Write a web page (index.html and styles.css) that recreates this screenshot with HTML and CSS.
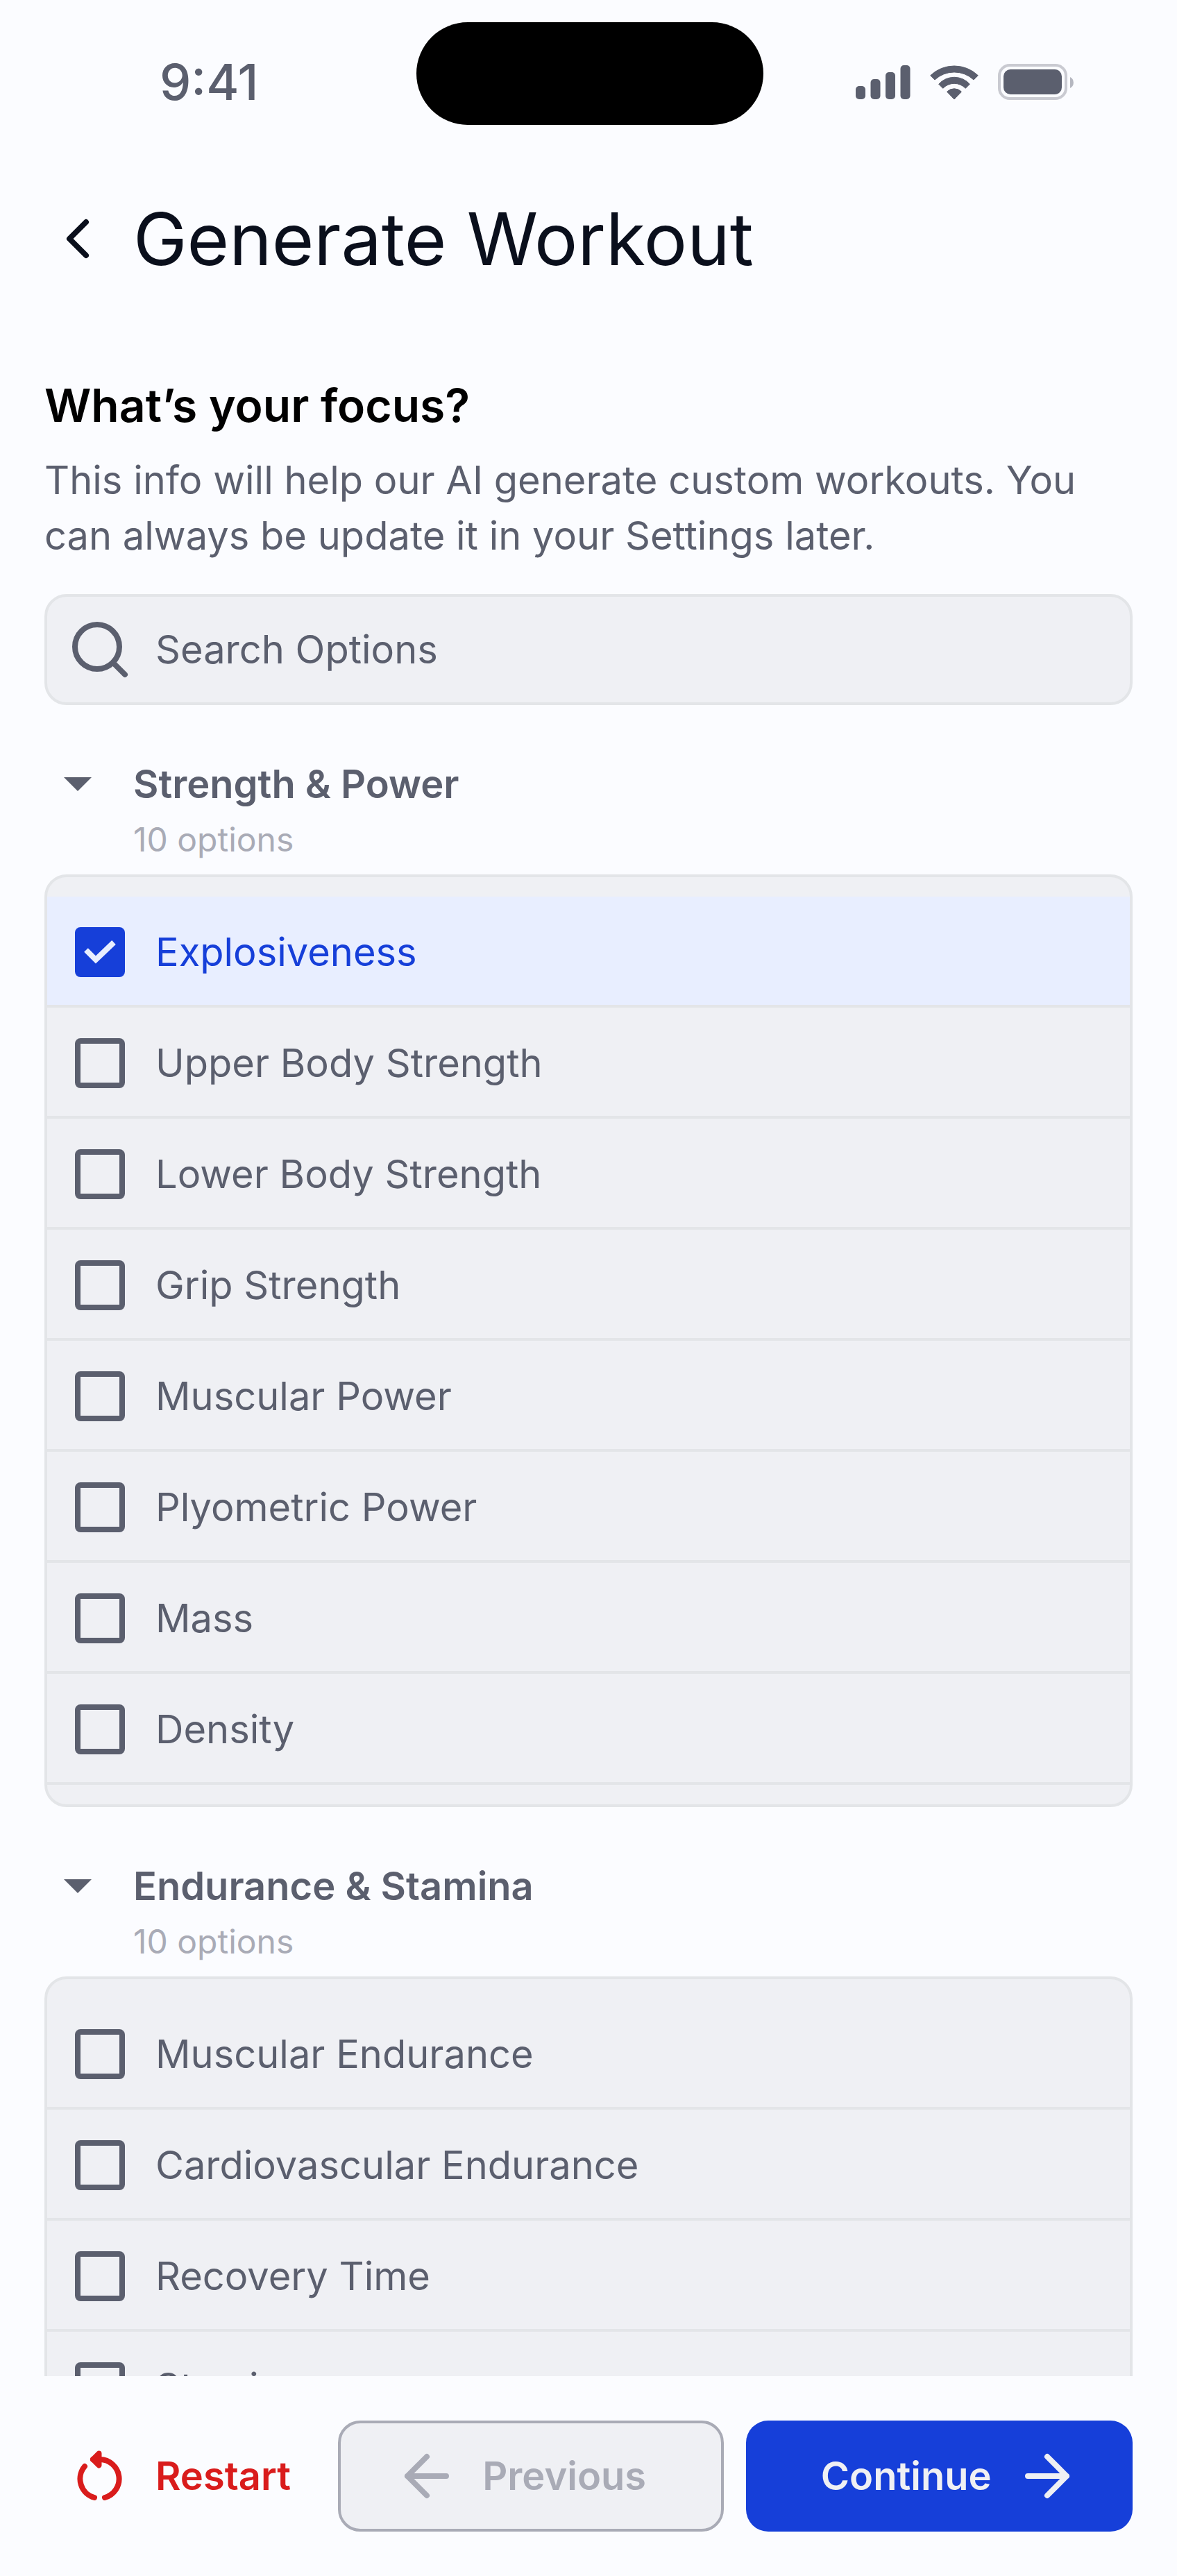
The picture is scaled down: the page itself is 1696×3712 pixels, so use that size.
FILE: index.html
```html
<!DOCTYPE html>
<html lang="en">
<head>
<meta charset="utf-8">
<meta name="viewport" content="width=device-width, initial-scale=1">
<title>Generate Workout</title>
<link rel="stylesheet" href="styles.css">
</head>
<body>
<div class="screen">
  <div class="status">
    <span class="status-time">9:41</span>
    <span class="island"></span>
    <span class="status-icons">
      <svg width="80" height="52" viewBox="0 0 80 52" fill="currentColor" aria-hidden="true">
        <rect x="1" y="32" width="14" height="19" rx="5"/><rect x="22.500" y="22" width="14" height="29" rx="5"/><rect x="44" y="12" width="14" height="39" rx="5"/><rect x="65.500" y="2" width="14" height="49" rx="5"/>
      </svg>
      <svg width="70" height="52" viewBox="0 0 70 52" fill="currentColor" stroke="currentColor" stroke-linejoin="round" aria-hidden="true">
        <path d="M.7 16.800A49.500 49.500 0 0 1 69.300 16.800L63 23A41 41 0 0 0 7 23z"/>
        <path d="M12.700 29.200A30 30 0 0 1 57.300 29.200L51.300 35.300A22.500 22.500 0 0 0 18.700 35.300z"/>
        <path d="M24.600 40.200A14.500 14.500 0 0 1 45.400 40.200L35 51z"/>
      </svg>
      <svg width="110" height="52" viewBox="0 0 110 52" aria-hidden="true">
        <rect x="2" y="2" width="96" height="48" rx="15" fill="none" stroke="#c9cad1" stroke-width="4"/>
        <rect x="8" y="8" width="84" height="36" rx="10" fill="currentColor"/>
        <path d="M104 19v16a9 9 0 0 0 0-16z" fill="#b5b7c0"/>
      </svg>
    </span>
  </div>

  <header class="topbar">
    <button class="back" type="button" aria-label="Back">
      <svg width="64" height="64" viewBox="0 0 64 64" fill="none" stroke="currentColor" stroke-width="8" stroke-linecap="round" stroke-linejoin="round"><path d="M44 8 20 32l24 24"/></svg>
    </button>
    <h1 class="title">Generate Workout</h1>
  </header>

  <main class="content">
    <h2 class="question">What’s your focus?</h2>
    <p class="lead">This info will help our AI generate custom workouts. You can always be update it in your Settings later.</p>
    <label class="search">
      <svg width="96" height="96" viewBox="0 0 96 96" fill="none" stroke="currentColor" stroke-width="8" stroke-linecap="round" aria-hidden="true"><circle cx="44" cy="44" r="32"/><path d="m67 67 17 17"/></svg>
      <input class="search-input" type="search" placeholder="Search Options" aria-label="Search Options">
    </label>

    <section class="group">
      <button class="group-head" type="button" aria-expanded="true">
        <svg class="caret" width="40" height="20" viewBox="0 0 40 20" fill="currentColor" aria-hidden="true"><path d="M0 0h40L20 20z"/></svg>
        <span class="group-name">Strength &amp; Power</span>
        <span class="group-count">10 options</span>
      </button>
      <div class="options">
        <label class="option"><input class="box" type="checkbox" checked><span>Explosiveness</span></label>
        <label class="option"><input class="box" type="checkbox"><span>Upper Body Strength</span></label>
        <label class="option"><input class="box" type="checkbox"><span>Lower Body Strength</span></label>
        <label class="option"><input class="box" type="checkbox"><span>Grip Strength</span></label>
        <label class="option"><input class="box" type="checkbox"><span>Muscular Power</span></label>
        <label class="option"><input class="box" type="checkbox"><span>Plyometric Power</span></label>
        <label class="option"><input class="box" type="checkbox"><span>Mass</span></label>
        <label class="option"><input class="box" type="checkbox"><span>Density</span></label>
      </div>
    </section>

    <section class="group">
      <button class="group-head" type="button" aria-expanded="true">
        <svg class="caret" width="40" height="20" viewBox="0 0 40 20" fill="currentColor" aria-hidden="true"><path d="M0 0h40L20 20z"/></svg>
        <span class="group-name">Endurance &amp; Stamina</span>
        <span class="group-count">10 options</span>
      </button>
      <div class="options">
        <label class="option"><input class="box" type="checkbox"><span>Muscular Endurance</span></label>
        <label class="option"><input class="box" type="checkbox"><span>Cardiovascular Endurance</span></label>
        <label class="option"><input class="box" type="checkbox"><span>Recovery Time</span></label>
        <label class="option"><input class="box" type="checkbox"><span>Stamina</span></label>
      </div>
    </section>
  </main>

  <footer class="actions">
    <button class="btn btn-restart" type="button">
      <svg width="96" height="96" viewBox="0 0 96 96" fill="none" stroke="currentColor" stroke-width="8" stroke-linecap="round" stroke-linejoin="round" aria-hidden="true"><path d="M55 79A28 28 0 0 0 48 24H38"/><path d="m46.500 15.500-8.500 8.500 8.500 8.500z" fill="currentColor"/><path d="M26 34A28 28 0 0 0 40 79"/></svg>
      Restart
    </button>
    <button class="btn btn-previous" type="button" disabled>
      <svg width="96" height="96" viewBox="0 0 96 96" fill="none" stroke="currentColor" stroke-width="8" stroke-linecap="round" stroke-linejoin="round" aria-hidden="true"><path d="M76 48H20M48 20 20 48l28 28"/></svg>
      Previous
    </button>
    <button class="btn btn-continue" type="button">
      Continue
      <svg width="96" height="96" viewBox="0 0 96 96" fill="none" stroke="currentColor" stroke-width="8" stroke-linecap="round" stroke-linejoin="round" aria-hidden="true"><path d="M20 48h56M48 20l28 28-28 28"/></svg>
    </button>
  </footer>
</div>
</body>
</html>
```
FILE: styles.css
```css
:root {
  --bg: #fbfcff;
  --surface: #eff0f4;
  --line: #e3e5e8;
  --text: #5b5f6e;
  --muted: #a9abb6;
  --primary: #163fd9;
  --primary-soft: #e8eeff;
  --danger: #d91c1c;
}

* { box-sizing: border-box; }

body {
  margin: 0;
  background: var(--bg);
  color: var(--text);
  font: 400 56px/80px Inter, "Liberation Sans", sans-serif;
  font-optical-sizing: none;
}

button, input { font: inherit; color: inherit; }
button { border: 0; padding: 0; background: none; cursor: pointer; }
svg { display: block; flex: none; }
h1, h2, p { margin: 0; }

.screen { display: flex; flex-direction: column; height: 100vh; }

.status {
  display: grid;
  grid-template-columns: 1fr auto 1fr;
  align-items: center;
  padding: 32px 148px 0 152px;
}
.status-time { padding: 24px 0 0 78px; font-size: 72px; font-weight: 500; line-height: 80px; }
.island { width: 500px; height: 148px; border-radius: 74px; background: #000; }
.status-icons { display: flex; justify-content: flex-end; gap: 28px; padding-top: 24px; }

.topbar { display: flex; align-items: center; gap: 48px; padding: 100px 64px 120px 80px; color: #0a0f1c; }
.title { font-size: 104px; font-weight: 400; line-height: 128px; }

.content { flex: 1; min-height: 0; overflow-y: auto; scrollbar-width: none; padding: 12px 64px 0; }
.question { color: #000; font-size: 66px; font-weight: 600; line-height: 88px; }
.lead { margin-top: 24px; }

.search {
  display: flex;
  align-items: center;
  gap: 32px;
  height: 160px;
  margin-top: 44px;
  padding: 0 28px;
  border: 4px solid var(--line);
  border-radius: 32px;
  background: var(--surface);
}
.search-input { flex: 1; min-width: 0; padding: 0; border: 0; outline: 0; background: none; }
.search-input::placeholder { color: var(--text); opacity: 1; }

.group { margin-top: 74px; }
.group-head {
  display: grid;
  grid-template-columns: 40px 1fr;
  column-gap: 60px;
  align-items: center;
  width: 100%;
  padding: 0 28px 10px;
  text-align: left;
}
.group-name { font-weight: 600; }
.group-count { grid-column: 2; color: var(--muted); font-size: 48px; }

.options {
  padding: 28px 0;
  border: 4px solid var(--line);
  border-radius: 32px;
  background: var(--surface);
}
.option {
  display: flex;
  align-items: center;
  gap: 44px;
  height: 160px;
  padding: 4px 40px 0;
  border-bottom: 4px solid var(--line);
}
.option:has(:checked) { background: var(--primary-soft); color: var(--primary); }
.box {
  appearance: none;
  flex: none;
  width: 72px;
  height: 72px;
  margin: 0;
  border: 8px solid var(--text);
  border-radius: 8px;
}
.box:checked {
  border-color: var(--primary);
  background: var(--primary) url("data:image/svg+xml,%3Csvg xmlns='http://www.w3.org/2000/svg' viewBox='0 0 56 56' fill='none' stroke='%23e8eeff' stroke-width='8'%3E%3Cpath d='m8 25 14 14 26-25'/%3E%3C/svg%3E") center / 56px no-repeat;
}

.actions { display: grid; grid-template-columns: auto 1fr 1fr; gap: 32px; padding: 64px; }
.btn {
  display: flex;
  align-items: center;
  justify-content: center;
  gap: 32px;
  height: 160px;
  border-radius: 32px;
  font-weight: 600;
}
.btn-restart { padding: 0 36px 0 32px; color: var(--danger); }
.btn-previous { padding-right: 32px; border: 4px solid var(--muted); background: var(--surface); color: var(--muted); }
.btn-continue { padding-left: 32px; background: var(--primary); color: var(--surface); }
```
